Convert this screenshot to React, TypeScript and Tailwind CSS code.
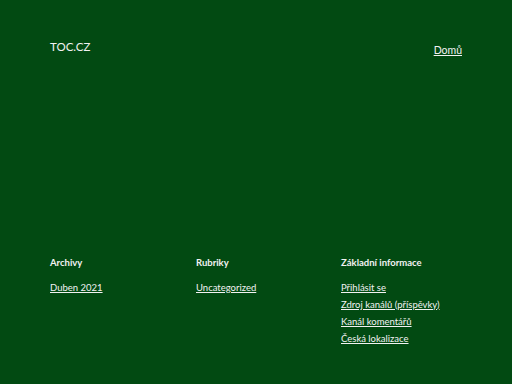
export default function App() {
  return (
    <div className="min-h-[384px] w-full bg-[#024a12] text-[#f2f2f2] font-['Lato',sans-serif] text-[9.5px] flex flex-col px-[50px]">
      <header className="flex justify-between items-start pt-[40px]">
        <div className="text-[11.5px] leading-[14px]">TOC.CZ</div>
        <nav className="pt-[3px] text-[10.5px]">
          <a href="#" className="underline">Domů</a>
        </nav>
      </header>
      <footer className="grid grid-cols-[146px_145px_1fr] mt-[198px]">
        <div>
          <h2 className="font-bold text-[9.5px] leading-[12px]">Archivy</h2>
          <ul className="mt-[12px] flex flex-col gap-[4px] leading-[13px]">
            <li><a href="#" className="underline">Duben 2021</a></li>
          </ul>
        </div>
        <div>
          <h2 className="font-bold text-[9.5px] leading-[12px]">Rubriky</h2>
          <ul className="mt-[12px] flex flex-col gap-[4px] leading-[13px]">
            <li><a href="#" className="underline">Uncategorized</a></li>
          </ul>
        </div>
        <div>
          <h2 className="font-bold text-[9.5px] leading-[12px]">Základní informace</h2>
          <ul className="mt-[12px] flex flex-col gap-[4px] leading-[13px]">
            <li><a href="#" className="underline">Přihlásit se</a></li>
            <li><a href="#" className="underline">Zdroj kanálů (příspěvky)</a></li>
            <li><a href="#" className="underline">Kanál komentářů</a></li>
            <li><a href="#" className="underline">Česká lokalizace</a></li>
          </ul>
        </div>
      </footer>
    </div>
  );
}
